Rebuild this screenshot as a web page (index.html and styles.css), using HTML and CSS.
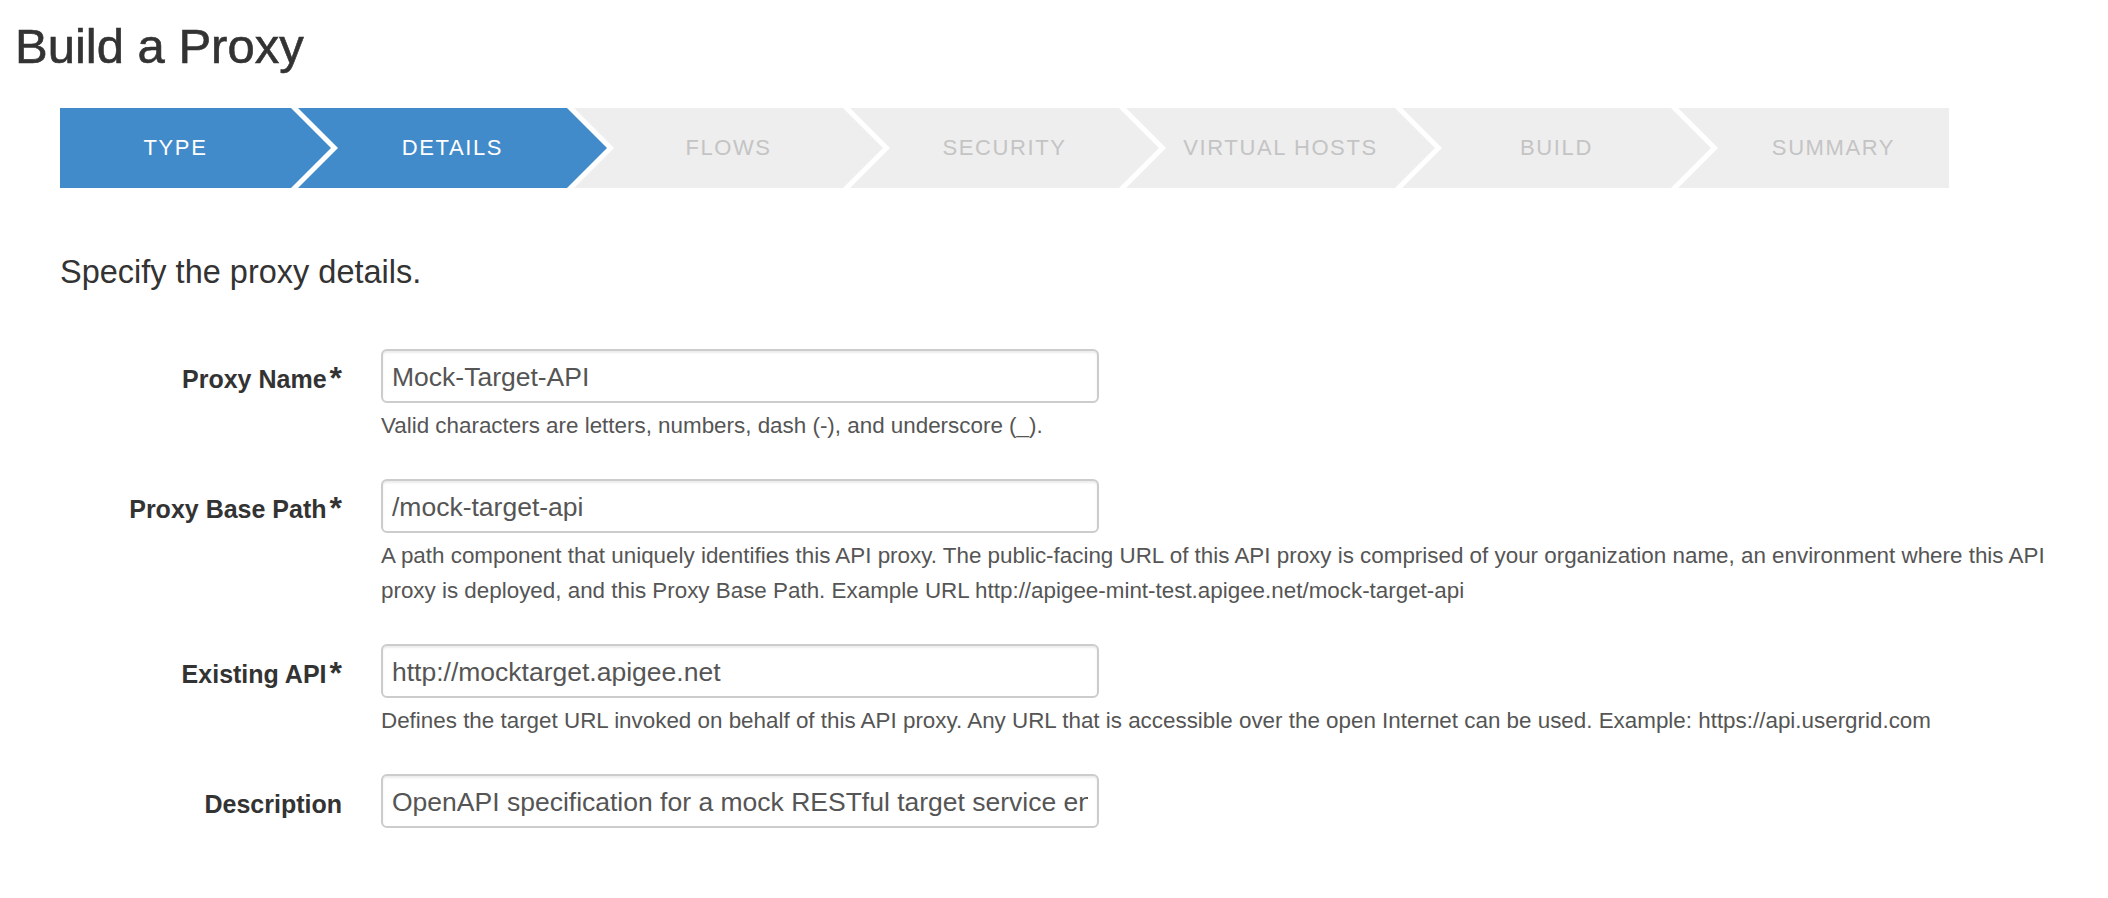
FILE: index.html
```html
<!DOCTYPE html>
<html lang="en">
<head>
<meta charset="utf-8">
<title>Build a Proxy</title>
<link rel="stylesheet" href="styles.css">
</head>
<body>
<h1 class="page-title">Build a Proxy</h1>

<ol class="stepper">
  <li class="step step-done">Type</li>
  <li class="step step-done">Details</li>
  <li class="step">Flows</li>
  <li class="step">Security</li>
  <li class="step">Virtual Hosts</li>
  <li class="step">Build</li>
  <li class="step">Summary</li>
</ol>

<section class="details">
  <p class="lead">Specify the proxy details.</p>

  <form class="form">
    <div class="form-row">
      <label class="form-label" for="proxy-name">Proxy Name<span class="req">*</span></label>
      <div class="form-field">
        <input class="input" id="proxy-name" type="text" value="Mock-Target-API">
        <p class="help">Valid characters are letters, numbers, dash (-), and underscore (_).</p>
      </div>
    </div>

    <div class="form-row">
      <label class="form-label" for="base-path">Proxy Base Path<span class="req">*</span></label>
      <div class="form-field">
        <input class="input" id="base-path" type="text" value="/mock-target-api">
        <p class="help">A path component that uniquely identifies this API proxy. The public-facing URL of this API proxy is comprised of your organization name, an environment where this API proxy is deployed, and this Proxy Base Path. Example URL http://apigee-mint-test.apigee.net/mock-target-api</p>
      </div>
    </div>

    <div class="form-row">
      <label class="form-label" for="existing-api">Existing API<span class="req">*</span></label>
      <div class="form-field">
        <input class="input" id="existing-api" type="text" value="http://mocktarget.apigee.net">
        <p class="help">Defines the target URL invoked on behalf of this API proxy. Any URL that is accessible over the open Internet can be used. Example: https://api.usergrid.com</p>
      </div>
    </div>

    <div class="form-row">
      <label class="form-label" for="description">Description</label>
      <div class="form-field">
        <input class="input" id="description" type="text" value="OpenAPI specification for a mock RESTful target service encompassing several endpoints.">
      </div>
    </div>
  </form>
</section>
</body>
</html>
```

FILE: styles.css
```css
* {
  box-sizing: border-box;
}

html, body {
  margin: 0;
  padding: 0;
  background: #ffffff;
}

body {
  font-family: "Liberation Sans", Arial, Helvetica, sans-serif;
  color: #333333;
}

.page-title {
  margin: 16px 0 0 15px;
  font-size: 49px;
  line-height: 60px;
  font-weight: normal;
  color: #333333;
  -webkit-text-stroke: 0.6px #333333;
}

/* ---------- stepper ---------- */
.stepper {
  display: flex;
  list-style: none;
  margin: 32px 0 0 60px;
  padding: 0;
  height: 80px;
}

.step {
  flex: none;
  width: 309px;
  height: 80px;
  margin-left: -33px;
  padding: 0 40px;
  display: flex;
  align-items: center;
  justify-content: center;
  background: #eeeeee;
  color: #c4c4c4;
  font-size: 22px;
  letter-spacing: 1.6px;
  text-transform: uppercase;
  white-space: nowrap;
  clip-path: polygon(0 0, calc(100% - 40px) 0, 100% 50%, calc(100% - 40px) 100%, 0 100%, 40px 50%);
}

.step:first-child {
  width: 271px;
  margin-left: 0;
  padding: 0 40px 0 0;
  clip-path: polygon(0 0, calc(100% - 40px) 0, 100% 50%, calc(100% - 40px) 100%, 0 100%);
}

.step:last-child {
  width: 271px;
  padding: 0 0 0 40px;
  clip-path: polygon(0 0, 100% 0, 100% 100%, 0 100%, 40px 50%);
}

.step-done {
  background: #428bca;
  color: #ffffff;
}

/* ---------- form ---------- */
.details {
  padding-left: 60px;
}

.lead {
  margin: 64px 0 0 0;
  font-size: 32.5px;
  line-height: 40px;
  color: #333333;
}

.form {
  margin-top: 57px;
  display: flex;
  flex-direction: column;
  gap: 36px;
}

.form-row {
  display: grid;
  grid-template-columns: 282px 718px;
  column-gap: 39px;
  align-items: start;
}

.form-label {
  text-align: right;
  font-size: 25px;
  font-weight: bold;
  line-height: 54px;
  padding-top: 3px;
  color: #333333;
  white-space: nowrap;
}

.req {
  margin-left: 3px;
  font-size: 32px;
  line-height: 0;
  vertical-align: -1px;
}

.form-field {
  min-width: 0;
}

.input {
  display: block;
  width: 718px;
  height: 54px;
  margin: 0;
  padding: 2px 9px 0;
  border: 2px solid #cccccc;
  border-radius: 6px;
  box-shadow: inset 0 2px 2px rgba(0, 0, 0, 0.075);
  font-family: "Liberation Sans", Arial, Helvetica, sans-serif;
  font-size: 26.5px;
  color: #555555;
  background: #ffffff;
  outline: none;
}

.help {
  margin: 5px 0 0 0;
  width: 1700px;
  font-size: 22.4px;
  line-height: 35px;
  color: #555555;
}
```
